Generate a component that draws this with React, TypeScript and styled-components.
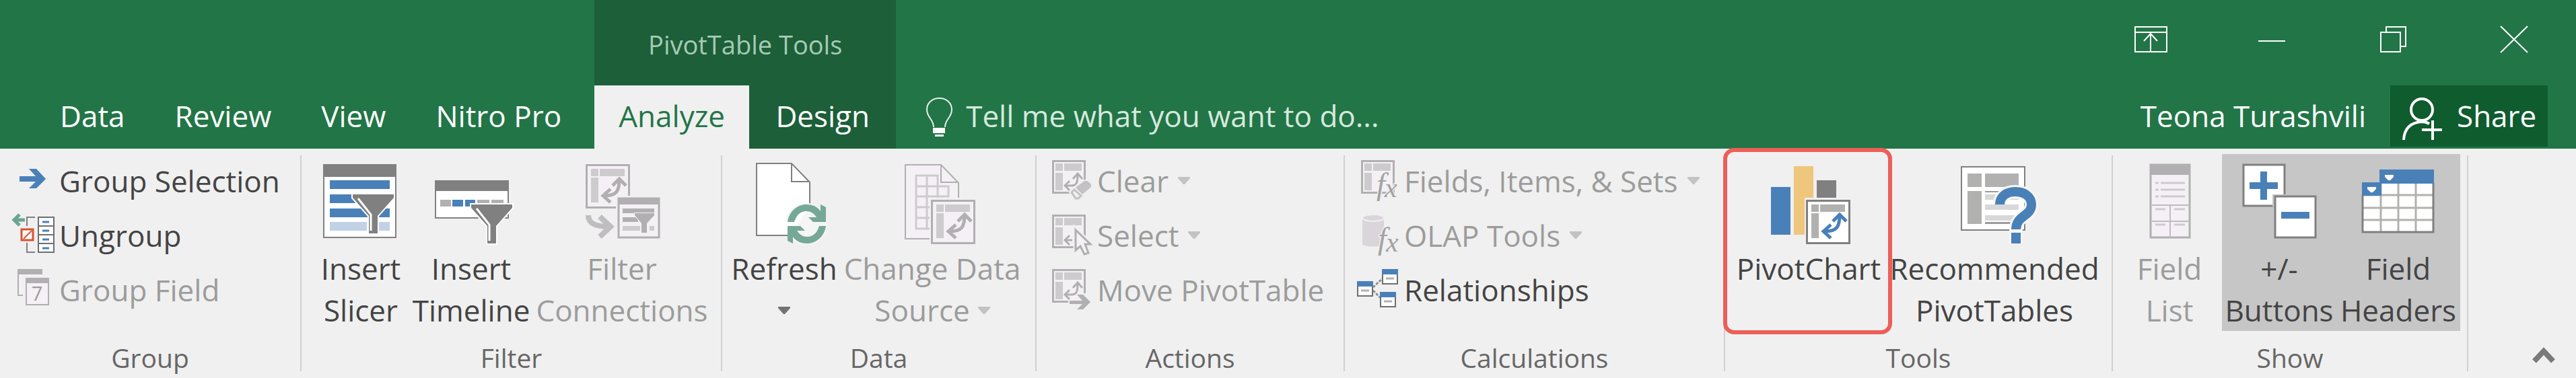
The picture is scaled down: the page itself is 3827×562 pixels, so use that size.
import React from "react";
import styled, { createGlobalStyle, css } from "styled-components";

const BLUE = "#4a80b8";
const GRAY = "#7f807f";
const MUTED = "#b1afb1";
const MUTED_LIGHT = "#cdcbce";
const MUTED_FILL = "#f5f0f6";

const GlobalStyle = createGlobalStyle`
  *, *::before, *::after { box-sizing: border-box; }
  body { margin: 0; background: #f0f0f0; }
  button, input { font: inherit; color: inherit; background: none; border: 0; padding: 0; margin: 0; }
  svg { display: block; flex: none; overflow: visible; }
`;

const Window = styled.div`
  font-family: "Open Sans", "Noto Sans", sans-serif;
  font-size: 44px;
  line-height: 62px;
  color: #444;
  white-space: nowrap;
`;

/* ---------- header ---------- */

const Header = styled.header`
  display: flex;
  align-items: stretch;
  background: #227547;
  color: #fff;
`;

const TabStrip = styled.nav`
  display: flex;
  align-items: flex-end;
  padding: 0 12px 0 52px;
`;

const Tab = styled.button<{ $active?: boolean; $width?: number }>`
  height: 94px;
  line-height: 90px;
  padding: 0 ${(p) => (p.$width ? 0 : 37)}px 4px;
  width: ${(p) => (p.$width ? `${p.$width}px` : "auto")};
  background: ${(p) => (p.$active ? "#f0f0f0" : "transparent")};
  color: ${(p) => (p.$active ? "#227547" : "#fff")};
`;

const ContextTabs = styled.section`
  background: #1c5f39;
`;

const ContextTitle = styled.h2`
  margin: 0;
  height: 127px;
  padding-top: 4px;
  display: flex;
  align-items: center;
  justify-content: center;
  font-size: 38px;
  font-weight: 400;
  color: #a6cbb4;
`;

const TabRow = styled.div`
  display: flex;
`;

const TellMe = styled.label`
  flex: 1;
  align-self: flex-end;
  height: 94px;
  padding-left: 40px;
  display: flex;
  gap: 14px;
`;

const TellMeInput = styled.input`
  flex: 1;
  height: 90px;
  outline: 0;
  &::placeholder { color: #d6e9de; opacity: 1; }
`;

const Account = styled.div`
  display: flex;
  flex-direction: column;
`;

const WindowControls = styled.div`
  display: flex;
  justify-content: flex-end;
  height: 127px;
  padding: 0 2px 9px 0;
`;

const WindowButton = styled.button`
  width: 180px;
  display: flex;
  align-items: center;
  justify-content: center;
`;

const UserRow = styled.div`
  display: flex;
  justify-content: flex-end;
  height: 94px;
  padding-right: 42px;
  line-height: 90px;
`;

const UserName = styled.span`
  margin-right: 36px;
`;

const ShareButton = styled.button`
  display: flex;
  gap: 15px;
  width: 234px;
  height: 91px;
  padding-left: 16px;
  background: #0f5c2e;
`;

/* ---------- ribbon ---------- */

const Ribbon = styled.main`
  display: flex;
  background: #f0f0f0;
`;

const Group = styled.section<{ $width: number }>`
  display: flex;
  flex: none;
  width: ${(p) => p.$width}px;
`;

const GroupInner = styled.div`
  flex: 1;
  min-width: 0;
  padding: 8px 0 5px;
`;

const Separator = styled.i`
  width: 2px;
  margin: 10px 0;
  background: #d0d0d0;
`;

const GroupBody = styled.div<{ $indent: number }>`
  display: flex;
  height: 263px;
  padding-left: ${(p) => p.$indent}px;
`;

const GroupTitle = styled.h3`
  margin: 15px 0 0;
  font-size: 39px;
  line-height: 50px;
  font-weight: 400;
  color: #666;
  text-align: center;
`;

const Stack = styled.div`
  display: flex;
  flex-direction: column;
`;

const disabledText = css`
  &:disabled { color: #9c9c9c; }
`;

const SmallButton = styled.button`
  display: flex;
  align-items: center;
  gap: 2px;
  height: 81px;
  padding-bottom: 2px;
  ${disabledText}
`;

const LargeButton = styled.button<{ $width: number; $pressed?: boolean }>`
  position: relative;
  flex: none;
  display: flex;
  flex-direction: column;
  align-items: center;
  width: ${(p) => p.$width}px;
  height: 263px;
  padding-top: 13px;
  background: ${(p) => (p.$pressed ? "#c6c6c6" : "transparent")};
  ${disabledText}
`;

const LargeLabel = styled.span`
  display: flex;
  flex-direction: column;
  align-items: center;
  margin-top: 6px;
`;

const Line = styled.span`
  display: flex;
  align-items: center;
  height: 62px;
`;

const Highlight = styled.span`
  position: absolute;
  inset: -9px 0 -5px -3px;
  border: 6px solid #ec5f58;
  border-radius: 16px;
`;

const CaretIcon = styled.svg<{ $gap?: boolean }>`
  margin-left: ${(p) => (p.$gap ? 12 : 0)}px;
`;

const CollapseButton = styled.button`
  align-self: flex-end;
  margin: 0 31px 21px auto;
`;

/* ---------- icons ---------- */

type ArtProps = { children: React.ReactNode };

const LargeArt = ({ children }: ArtProps) => (
  <svg width="120" height="120" viewBox="0 0 120 120" fill="none" aria-hidden="true">{children}</svg>
);

const SmallArt = ({ children }: ArtProps) => (
  <svg width="70" height="81" viewBox="0 0 70 81" fill="none" aria-hidden="true">{children}</svg>
);

const WindowArt = ({ children }: ArtProps) => (
  <svg width="60" height="60" viewBox="0 0 60 60" fill="none" stroke="#fff" strokeWidth="2" aria-hidden="true">{children}</svg>
);

const Caret = ({ gap, muted }: { gap?: boolean; muted?: boolean }) => (
  <CaretIcon $gap={gap} width="18" height="11" viewBox="0 0 18 11" aria-hidden="true">
    <path d="M0 0H18V2L10 11H8L0 2Z" fill={muted ? "#c3c3c3" : "#737373"} />
  </CaretIcon>
);

const Funnel = ({ x, y }: { x: number; y: number }) => (
  <g transform={`translate(${x} ${y})`}>
    <path d="M0 0H61V5L37 32V58H24V32L0 5Z" fill={GRAY} stroke="#fff" strokeWidth="4" paintOrder="stroke" />
    <path d="M8 6L27 30V54" stroke="#fff" strokeWidth="3" />
  </g>
);

const PivotSheet = ({ x, y, muted }: { x: number; y: number; muted?: boolean }) => {
  const block = muted ? MUTED_LIGHT : "#b1b1b0";
  return (
    <g transform={`translate(${x} ${y})`}>
      <rect x="-2" y="-3" width="70" height="71" fill="#f2f1f2" />
      <rect x="1.5" y="1.5" width="63" height="63" fill={muted ? MUTED_FILL : "#fff"} stroke={muted ? MUTED : GRAY} strokeWidth="3" />
      <path d="M8 7H19V18H8ZM21 7H58V18H21ZM8 20H19V57H8Z" fill={block} />
      <path d="M50 23C50 40 46 47 28 47M40 32L50 22L60 32M37 37L26 47L37 57" stroke={muted ? MUTED : BLUE} strokeWidth="5" />
    </g>
  );
};

const SlicerIcon = () => (
  <LargeArt>
    <rect x="5" y="3" width="107" height="108" fill="#fff" stroke={GRAY} strokeWidth="2" />
    <path d="M4 2H113V21H4Z" fill={GRAY} />
    <path d="M14 26H103V39H14ZM14 47H103V60H14ZM14 68H103V81H14Z" fill={BLUE} />
    <path d="M14 88H103V101H14Z" fill="#c1d2e6" />
    <path d="M69 84H87V102H69Z" fill="#fff" />
    <Funnel x={48} y={47} />
  </LargeArt>
);

const TimelineIcon = () => (
  <LargeArt>
    <rect x="7" y="27" width="108" height="55" fill="#fff" stroke={GRAY} strokeWidth="2" />
    <path d="M6 26H116V42H6Z" fill={GRAY} />
    <path d="M14 55H30V65H14ZM69 55H87V65H69ZM90 55H108V65H90Z" fill="#b1b1b0" />
    <path d="M32 55H48V65H32ZM51 55H66V65H51Z" fill={BLUE} />
    <Funnel x={60} y={62} />
  </LargeArt>
);

const ConnectionsIcon = () => (
  <LargeArt>
    <PivotSheet x={6} y={2} muted />
    <path d="M10 78C10 90 20 95 42 95M27 80L43 95L27 110" stroke="#c0bdc1" strokeWidth="8" />
    <path d="M51 49H118V114H51Z" fill="#f0f0f0" />
    <rect x="55" y="53" width="60" height="58" fill={MUTED_FILL} stroke={MUTED} strokeWidth="3" />
    <path d="M54 52H116V62H54Z" fill={MUTED} />
    <path d="M61 68H108V75H61ZM61 81H84V88H61Z" fill={MUTED} />
    <path d="M61 94H87V101H61ZM101 94H108V101H101Z" fill={MUTED_LIGHT} />
    <path d="M79 75H108V78L97 90V104H89V90L79 78Z" fill={MUTED} stroke={MUTED_FILL} strokeWidth="2" paintOrder="stroke" />
  </LargeArt>
);

const RefreshIcon = () => {
  const arrow = "M65 88C67 72 80 62 93 62C103 62 110 66 114 72V62L122 66V88H103L96 81H108C104 75 99 72 93 72C84 72 78 78 75 88Z";
  return (
    <LargeArt>
      <path d="M19 1H71L98 29V108H19Z" fill="#fff" stroke={GRAY} strokeWidth="2" />
      <path d="M71 1V28H98" stroke={GRAY} strokeWidth="2" />
      <rect x="62" y="60" width="62" height="62" rx="30" fill="#f5f5f5" />
      <path d="M62 86V107H70L97 66V61Z" fill="#fff" />
      <path d={arrow} fill="#76a898" />
      <path d={arrow} fill="#76a898" transform="rotate(180 93.5 91)" />
    </LargeArt>
  );
};

const ChangeSourceIcon = () => (
  <LargeArt>
    <path d="M20 3H73L99 30V113H20Z" fill={MUTED_FILL} stroke={MUTED} strokeWidth="2" />
    <path d="M73 3V29H99" stroke={MUTED} strokeWidth="2" />
    <path d="M36 19H68V98H36ZM52 19V98M36 35H84V50H36M36 66H68M36 82H68M68 35V66" stroke={MUTED_LIGHT} strokeWidth="3" />
    <PivotSheet x={58} y={55} muted />
  </LargeArt>
);

const PivotChartIcon = () => (
  <LargeArt>
    <path d="M4 36H33V107H4Z" fill={BLUE} />
    <path d="M38 5H67V107H38Z" fill="#eec77c" />
    <path d="M72 26H101V52H72Z" fill={GRAY} />
    <PivotSheet x={56} y={55} />
  </LargeArt>
);

const RecommendedIcon = () => {
  const hook = "M68 62C68 50 78 43 91 43C104 43 115 50 115 62C115 80 92 78 92 99";
  return (
    <LargeArt>
      <rect x="11" y="6" width="94" height="94" fill="#fff" stroke={GRAY} strokeWidth="2" />
      <path d="M20 16H41V36H20ZM46 16H96V36H46ZM20 42H41V91H20Z" fill="#b1b1b0" />
      <path d="M46 42H96V44H46ZM46 88H96V91H46Z" fill="#9b9b9b" />
      <path d="M46 47H96V55H46ZM46 62H96V70H46ZM46 78H96V86H46Z" fill="#d8d8d8" />
      <path d={`${hook}M92 96V120`} stroke="#f6f6f6" strokeWidth="20" />
      <path d={hook} stroke={BLUE} strokeWidth="14" />
      <path d="M85 104H99V120H85Z" fill={BLUE} />
    </LargeArt>
  );
};

const FieldListIcon = () => (
  <LargeArt>
    <rect x="32" y="3" width="58" height="108" fill={MUTED_FILL} stroke={MUTED} strokeWidth="3" />
    <path d="M31 2H91V18H31Z" fill={MUTED} />
    <path d="M39 30H44M47 30H83M39 40H44M47 40H83M39 50H44M47 50H83M39 69H54M67 69H83M39 92H54M67 92H83" stroke={MUTED_LIGHT} strokeWidth="3" />
    <path d="M32 63H90M32 87H90M61 63V111" stroke="#bfbcc0" strokeWidth="2" />
  </LargeArt>
);

const PlusMinusIcon = () => (
  <LargeArt>
    <rect x="7" y="3" width="61" height="61" fill="#fff" stroke={GRAY} strokeWidth="3" />
    <path d="M32 13H42V29H58V39H42V55H32V39H16V29H32Z" fill={BLUE} />
    <path d="M50 47H115V65H50Z" fill="#c6c6c6" />
    <rect x="54" y="50" width="60" height="61" fill="#fff" stroke={GRAY} strokeWidth="3" />
    <path d="M63 73H105V83H63Z" fill={BLUE} />
  </LargeArt>
);

const FieldHeadersIcon = () => (
  <LargeArt>
    <path d="M7 48H34V30H112V103H7Z" fill="#fff" />
    <path d="M34 30V103M60 30V103M86 30V103M7 48H112M7 67H112M7 85H112" stroke="#b1b1b0" strokeWidth="3" />
    <path d="M7 48V103H112V30" stroke={GRAY} strokeWidth="3" />
    <path d="M32 10H113V31H35V49H6V29H32Z" fill={BLUE} />
    <path d="M40 18H53V21L48 26H45L40 21ZM14 36H27V39L22 44H19L14 39Z" fill="#fff" />
  </LargeArt>
);

const GroupSelectionIcon = () => (
  <SmallArt>
    <path d="M27 23H38L52 38L38 52H27L37 42H13V34H37Z" fill={BLUE} />
  </SmallArt>
);

const UngroupIcon = () => (
  <SmallArt>
    <path d="M6 18H21M13 10L5 18L13 26" stroke="#6aa58f" strokeWidth="5" />
    <path d="M36 14H24V27M24 52V66H36" stroke={GRAY} strokeWidth="2" />
    <rect x="16" y="32" width="17" height="16" fill="#fff" stroke="#d9532f" strokeWidth="3" />
    <path d="M19 46L31 34" stroke="#d9532f" strokeWidth="2" />
    <rect x="41" y="14" width="23" height="52" fill="#fff" stroke="#6e6e6e" strokeWidth="2" />
    <path d="M41 27H64M41 40H64M41 53H64" stroke="#6e6e6e" strokeWidth="2" />
    <path d="M47 21H57M47 34H57M47 47H57M47 60H57" stroke={BLUE} strokeWidth="3" />
  </SmallArt>
);

const GroupFieldIcon = () => (
  <SmallArt>
    <path d="M11 12V49H18V20H46V12Z" fill={MUTED_FILL} />
    <path d="M18 49H11V11H46V18" stroke={MUTED} strokeWidth="2" />
    <path d="M10 10H47V18H10Z" fill={MUTED} />
    <path d="M20 21H59V66H20Z" fill="#f0f0f0" />
    <rect x="23" y="24" width="33" height="39" fill={MUTED_FILL} stroke={MUTED} strokeWidth="2" />
    <path d="M22 23H57V31H22Z" fill={MUTED} />
    <text x="39" y="57" fontSize="29" textAnchor="middle" fill="#9c9a9c">7</text>
  </SmallArt>
);

const MiniPivot = ({ x = 5, arrow = "both" }: { x?: number; arrow?: "both" | "left" | "none" }) => (
  <g transform={`translate(${x} 10)`}>
    <rect x="1.5" y="1.5" width="47" height="47" fill={MUTED_FILL} stroke={MUTED} strokeWidth="3" />
    <path d="M5 5H16V16H5ZM18 5H44V16H18ZM5 19H16V45H5Z" fill={MUTED_LIGHT} />
    {arrow !== "none" && <path d="M30 38H20M26 31L19 38L26 45" stroke={MUTED} strokeWidth="3" />}
    {arrow === "both" && <path d="M29 38C36 38 38 34 38 22M31 28L38 20L45 28" stroke={MUTED} strokeWidth="3" />}
  </g>
);

const ClearIcon = () => (
  <SmallArt>
    <MiniPivot />
    <path d="M29 57L48 41L58 38L68 46L42 74Z" fill="#f0f0f0" />
    <path d="M40 51L53 41H58L63 46V50L50 61Z" fill="#c4c1c5" />
    <path d="M38 54L34 58L40 67H44L48 63Z" fill="#f0f0f0" stroke="#c4c1c5" strokeWidth="3" />
  </SmallArt>
);

const SelectIcon = () => (
  <SmallArt>
    <MiniPivot arrow="left" />
    <path d="M40 32V64L47 57L53 69L59 67L54 54H62Z" fill="#f4f2f4" stroke="#f0f0f0" strokeWidth="7" />
    <path d="M40 33V63L47 57L53 69L59 67L54 54H62Z" fill="#f4f2f4" stroke={MUTED} strokeWidth="3" />
  </SmallArt>
);

const MoveIcon = () => (
  <SmallArt>
    <MiniPivot />
    <path d="M29 56H43V46H56L66 60L56 73H29Z" fill="#f0f0f0" />
    <path d="M42 48H51L62 59L51 70H42L50 62H31V57H50Z" fill={MUTED} />
  </SmallArt>
);

const FunctionMark = ({ x }: { x: number }) => (
  <g fontFamily='"Liberation Serif", serif' fontStyle="italic" fill="#a3a1a3" stroke="#f0f0f0" strokeWidth="3" paintOrder="stroke">
    <text x={x} y="61" fontSize="46">f</text>
    <text x={x + 12} y="65" fontSize="42">x</text>
  </g>
);

const FieldsIcon = () => (
  <SmallArt>
    <MiniPivot x={8} arrow="none" />
    <FunctionMark x={31} />
  </SmallArt>
);

const OlapIcon = () => (
  <SmallArt>
    <path d="M10 15V53C10 59 42 59 42 53V15Z" fill="#d9d5da" />
    <ellipse cx="26" cy="15" rx="16" ry="5" fill="#d9d5da" stroke="#f0f0f0" strokeWidth="2" />
    <FunctionMark x={33} />
  </SmallArt>
);

const RelationshipsIcon = () => (
  <SmallArt>
    <path d="M26 37L40 24M26 42L38 54" stroke="#8f8f8f" strokeWidth="3" strokeDasharray="4 2" />
    {[[2, 28], [39, 10], [36, 44]].map(([x, y]) => (
      <g key={x} transform={`translate(${x} ${y})`}>
        <rect x="1" y="1" width="22" height="21" fill="#fff" stroke="#6e6e6e" strokeWidth="2" />
        <path d="M0 0H24V8H0Z" fill={BLUE} />
        <path d="M6 14H18" stroke="#b1b1b0" strokeWidth="3" />
      </g>
    ))}
  </SmallArt>
);

/* ---------- composed controls ---------- */

type SmallProps = { icon: React.ReactNode; label: string; menu?: boolean; disabled?: boolean };

const SmallCommand = ({ icon, label, menu, disabled }: SmallProps) => (
  <SmallButton type="button" disabled={disabled}>
    {icon}
    {label}
    {menu && <Caret gap muted={disabled} />}
  </SmallButton>
);

type LargeProps = {
  icon: React.ReactNode;
  lines: string[];
  width: number;
  menu?: boolean;
  disabled?: boolean;
  pressed?: boolean;
  highlighted?: boolean;
};

const LargeCommand = ({ icon, lines, width, menu, disabled, pressed, highlighted }: LargeProps) => (
  <LargeButton type="button" $width={width} $pressed={pressed} aria-pressed={pressed} disabled={disabled}>
    {icon}
    <LargeLabel>
      {lines.map((line, i) => (
        <Line key={line}>
          {line}
          {menu && i > 0 && i === lines.length - 1 && <Caret gap muted={disabled} />}
        </Line>
      ))}
      {menu && lines.length === 1 && <Line><Caret muted={disabled} /></Line>}
    </LargeLabel>
    {highlighted && <Highlight />}
  </LargeButton>
);

type RibbonGroupProps = { title: string; width: number; indent?: number; children: React.ReactNode };

const RibbonGroup = ({ title, width, indent = 0, children }: RibbonGroupProps) => (
  <Group $width={width} aria-label={title}>
    <GroupInner>
      <GroupBody $indent={indent}>{children}</GroupBody>
      <GroupTitle>{title}</GroupTitle>
    </GroupInner>
    <Separator />
  </Group>
);

export default function App() {
  return (
    <Window>
      <GlobalStyle />
      <Header>
        <TabStrip>
          {["Data", "Review", "View", "Nitro Pro"].map((name) => (
            <Tab key={name} type="button">{name}</Tab>
          ))}
        </TabStrip>
        <ContextTabs>
          <ContextTitle>PivotTable Tools</ContextTitle>
          <TabRow>
            <Tab type="button" $width={230} $active>Analyze</Tab>
            <Tab type="button" $width={218}>Design</Tab>
          </TabRow>
        </ContextTabs>
        <TellMe>
          <svg width="50" height="94" viewBox="0 0 50 94" fill="none" aria-hidden="true">
            <path d="M16 62C16 50 6 48 6 36C6 26 14 19 24.5 19C35 19 43 26 43 36C43 48 33 50 33 62" stroke="#e8f2ec" strokeWidth="2" />
            <path d="M15 63H33V71H15ZM18 73H31V76H18Z" fill="#fff" />
          </svg>
          <TellMeInput type="text" aria-label="Tell me" placeholder="Tell me what you want to do..." />
        </TellMe>
        <Account>
          <WindowControls>
            <WindowButton type="button" aria-label="Ribbon display options">
              <WindowArt><path d="M7 11H54V48H7ZM7 19H54M30 48V21M20 32L30 21L40 32" /></WindowArt>
            </WindowButton>
            <WindowButton type="button" aria-label="Minimize">
              <WindowArt><path d="M10 32H50" /></WindowArt>
            </WindowButton>
            <WindowButton type="button" aria-label="Restore">
              <WindowArt><path d="M12 19H41V48H12ZM20 19V11H49V40H41" /></WindowArt>
            </WindowButton>
            <WindowButton type="button" aria-label="Close">
              <WindowArt><path d="M10 10L50 49M50 10L10 49" /></WindowArt>
            </WindowButton>
          </WindowControls>
          <UserRow>
            <UserName>Teona Turashvili</UserName>
            <ShareButton type="button">
              <svg width="68" height="91" viewBox="0 0 68 91" fill="none" stroke="#fff" strokeWidth="4" aria-hidden="true">
                <ellipse cx="31" cy="36" rx="16" ry="16" />
                <path d="M4 81C5 64 14 55 31 54C36 54 39 55 42 57" />
                <path d="M31 66H61M47 52V81" />
              </svg>
              Share
            </ShareButton>
          </UserRow>
        </Account>
      </Header>

      <Ribbon>
        <RibbonGroup title="Group" width={448} indent={16}>
          <Stack>
            <SmallCommand icon={<GroupSelectionIcon />} label="Group Selection" />
            <SmallCommand icon={<UngroupIcon />} label="Ungroup" />
            <SmallCommand icon={<GroupFieldIcon />} label="Group Field" disabled />
          </Stack>
        </RibbonGroup>

        <RibbonGroup title="Filter" width={625} indent={8}>
          <LargeCommand icon={<SlicerIcon />} lines={["Insert", "Slicer"]} width={160} />
          <LargeCommand icon={<TimelineIcon />} lines={["Insert", "Timeline"]} width={168} />
          <LargeCommand icon={<ConnectionsIcon />} lines={["Filter", "Connections"]} width={280} disabled />
        </RibbonGroup>

        <RibbonGroup title="Data" width={467} indent={12}>
          <LargeCommand icon={<RefreshIcon />} lines={["Refresh"]} width={160} menu />
          <LargeCommand icon={<ChangeSourceIcon />} lines={["Change Data", "Source"]} width={280} menu disabled />
        </RibbonGroup>

        <RibbonGroup title="Actions" width={458} indent={18}>
          <Stack>
            <SmallCommand icon={<ClearIcon />} label="Clear" menu disabled />
            <SmallCommand icon={<SelectIcon />} label="Select" menu disabled />
            <SmallCommand icon={<MoveIcon />} label="Move PivotTable" disabled />
          </Stack>
        </RibbonGroup>

        <RibbonGroup title="Calculations" width={565} indent={16}>
          <Stack>
            <SmallCommand icon={<FieldsIcon />} label="Fields, Items, &amp; Sets" menu disabled />
            <SmallCommand icon={<OlapIcon />} label="OLAP Tools" menu disabled />
            <SmallCommand icon={<RelationshipsIcon />} label="Relationships" />
          </Stack>
        </RibbonGroup>

        <RibbonGroup title="Tools" width={576}>
          <LargeCommand icon={<PivotChartIcon />} lines={["PivotChart"]} width={248} highlighted />
          <LargeCommand icon={<RecommendedIcon />} lines={["Recommended", "PivotTables"]} width={304} />
        </RibbonGroup>

        <RibbonGroup title="Show" width={528} indent={6}>
          <LargeCommand icon={<FieldListIcon />} lines={["Field", "List"]} width={156} disabled />
          <LargeCommand icon={<PlusMinusIcon />} lines={["+/-", "Buttons"]} width={170} pressed />
          <LargeCommand icon={<FieldHeadersIcon />} lines={["Field", "Headers"]} width={184} pressed />
        </RibbonGroup>

        <CollapseButton type="button" aria-label="Collapse the ribbon">
          <svg width="34" height="24" viewBox="0 0 34 24" fill="none" aria-hidden="true">
            <path d="M3 20L17 5L31 20" stroke="#7a7a7a" strokeWidth="8" />
          </svg>
        </CollapseButton>
      </Ribbon>
    </Window>
  );
}
